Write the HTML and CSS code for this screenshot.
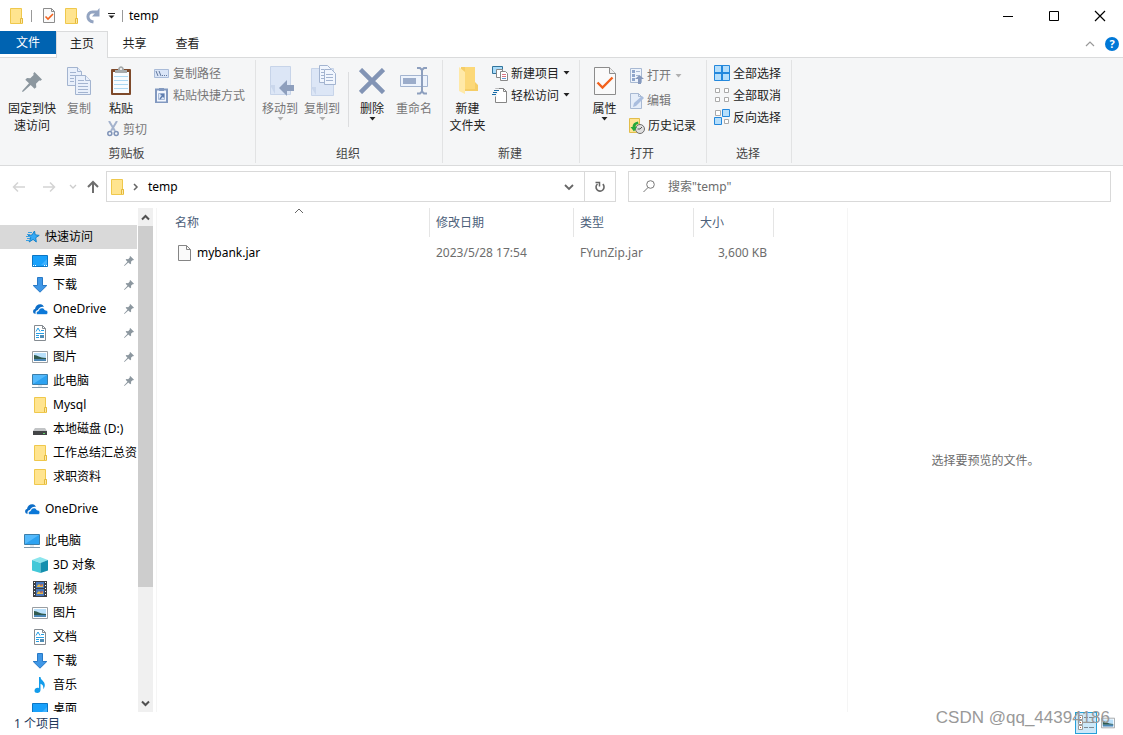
FILE: index.html
```html
<!DOCTYPE html>
<html lang="zh-CN">
<head>
<meta charset="utf-8">
<title>temp</title>
<link rel="stylesheet" href="styles.css">
</head>
<body>
<svg class="sprite" aria-hidden="true">
  <symbol id="folder" viewBox="0 0 16 16"><path d="M2.500.5h11v10h1v5h-12z" fill="#ffe48f" stroke="#efc84c"/><path d="M12.500 15V10.500h2V15" fill="#ffe9a5" stroke="#e3b93c"/></symbol>
  <symbol id="star" viewBox="0 0 16 16"><path d="M10.500 2l.7 3.800 4 .6-3.500 2.300.6 4.300-3.200-2.600-4 2.600 1.800-4.300L4 6.500l4-.5z" fill="#35a9f5" stroke="#1583cc"/><path d="M4 3.500h4M3 5.500h3M2 7.500h4M3 9.500h3M2 11.500h4" stroke="#3c9fe0"/></symbol>
  <symbol id="pin" viewBox="0 0 20 20"><path d="M12.500 0L20 7.500l-1.500 1.200-1.300-.3-3.200 3.300.3 3.500-1.800 1.500L8.700 13 1.500 19.500 0 20l.5-1.500L7 11.300 3.300 7.700 5 6l3.300.3L11.600 3l-.3-1.500z" fill="#8c979f"/></symbol>
  <symbol id="desktop" viewBox="0 0 16 16"><path d="M.5 2.500h15v11H.5z" fill="#19a1fb" stroke="#0b76c5"/><path d="M9 12L15 6v6z" fill="#3fb2ff"/><path d="M1 12.500h1M3 12.500h1M12 12.500h1M14 12.500h1" stroke="#fff"/></symbol>
  <symbol id="down" viewBox="0 0 16 16"><path d="M5.500.5h5v8h4.300L8 15.200 1.200 8.500h4.300z" fill="#3f97e6" stroke="#2879c6"/></symbol>
  <symbol id="cloud" viewBox="0 0 16 16"><path d="M2 12.500C.5 11 1 8.300 3 8 3.500 5 5.800 3 8.500 3.200c1.700.2 2.800 1.200 3.500 2.600-3-.6-5.300.8-6 3.200C3.800 9.300 3 11 3.800 12.800z" fill="#0c6dc7"/><path d="M5.500 13.500c-1.600-.4-1.500-3.400 1-3.600C7 6.700 11.500 5.800 12.800 9c1.800 0 3 .8 3 2.500 0 1.200-.7 2-1.800 2z" fill="#0b78d8" stroke="#fff" stroke-width=".6"/></symbol>
  <symbol id="doc" viewBox="0 0 16 16"><path d="M2.500.5h8l3 3v12h-11z" fill="#fff" stroke="#858b91"/><path d="M10.500.5v3h3" fill="none" stroke="#858b91"/><path d="M4 6.500L6 3l2 3.500M9 5.500h3M4 8.500h8M4 10.500h3M4 12.500h3" fill="none" stroke="#259ee4"/><path d="M8 10h4v3H8z" fill="#4f8db5"/></symbol>
  <symbol id="picture" viewBox="0 0 16 16"><path d="M.5 2.500h15v11H.5z" fill="#fff" stroke="#999ea3"/><path d="M2 4h12v8H2z" fill="#b9e0fb"/><path d="M2 6c4 0 5 3 12 3v1H2z" fill="#315b50"/><path d="M2 10h12v2H2z" fill="#4c87b6"/></symbol>
  <symbol id="pc" viewBox="0 0 16 16"><path d="M.5 1.500h15v10H.5z" fill="#54b9fb" stroke="#3b7eaa"/><path d="M1 11l14-9v9z" fill="#2ca2f1"/><path d="M6 12h4v2H6z" fill="#e4eaee"/><path d="M0 14.500h16" stroke="#8299aa"/></symbol>
  <symbol id="drive" viewBox="0 0 16 16"><path d="M3 7h10l2 3H1z" fill="#c2c4c6"/><path d="M1 10h14v4H1z" fill="#434547"/><path d="M11 12.500h2" stroke="#63d66b"/></symbol>
  <symbol id="cube" viewBox="0 0 16 16"><path d="M0 3l8-3 8 3-7 3z" fill="#8be5ed"/><path d="M0 3l8.500 3v10L0 13.500z" fill="#42c8d8"/><path d="M8.500 6L16 3v10.500L8.500 16z" fill="#148fae"/></symbol>
  <symbol id="video" viewBox="0 0 16 16"><path d="M1 0h14v16H1z" fill="#3d3f43"/><path d="M4 1h8v6H4zM4 8h8v7H4z" fill="#4778bd"/><path d="M5 5l2-2 2 2 2-2v3H5zM5 12l2-2 2 2 2-2v3H5z" fill="#e5b94a"/><path d="M8 4h3M8 11h3" stroke="#cf5848"/><path d="M2.500 1v14M13.500 1v14" stroke="#fff" stroke-dasharray="1 2"/></symbol>
  <symbol id="music" viewBox="0 0 16 16"><path d="M7 0h1.500c.3 3.500 4.300 4 4.300 8 0 1.800-.6 3-1.600 4.200.6-3.200-.6-4.800-2.700-5.500V13c0 1.800-1.500 3-3.200 3S2.500 15 2.500 13.700c0-2.200 2.700-3.500 4.500-2.500z" fill="#129ceb"/></symbol>
  <symbol id="check-doc" viewBox="0 0 22 28"><path d="M.5.500h15l6 6v21H.5z" fill="#fafafa" stroke="#8c8c8c"/><path d="M15.500.500v6h6" fill="#eee" stroke="#8c8c8c"/><path d="M3.500 15.500l5 5 10-10" fill="none" stroke="#f2611c" stroke-width="2.400"/></symbol>
  <symbol id="caret" viewBox="0 0 7 4"><path d="M.5 0h6l-3 3.500z" fill="currentColor"/></symbol>
</svg>

<div class="window">
  <header class="titlebar">
    <svg class="i16 app-icon"><use href="#folder"/></svg>
    <span class="bar"></span>
    <button class="quick" aria-label="属性"><svg width="12" height="15" viewBox="0 0 12 15"><path d="M.5.500h8l3 3v11H.5z" fill="#fafafa" stroke="#8c8c8c"/><path d="M8.500.500v3h3" fill="none" stroke="#8c8c8c"/><path d="M2.500 8.500l2.500 2.500 5-5" fill="none" stroke="#f2611c" stroke-width="1.600"/></svg></button>
    <button class="quick" aria-label="新建文件夹"><svg class="i16"><use href="#folder"/></svg></button>
    <button class="quick" aria-label="重做"><svg width="14" height="16" viewBox="0 0 14 16"><path d="M7.500 14C0 13 .5 4 6.500 4H11" fill="none" stroke="#93a4c1" stroke-width="3"/><path d="M13.500 0v8.500H6z" fill="#93a4c1"/></svg></button>
    <button class="quick narrow" aria-label="自定义快速访问工具栏"><svg width="7" height="6" viewBox="0 0 7 6"><path d="M0 .5h7" stroke="#222"/><path d="M.5 2.500h6l-3 3z" fill="#222"/></svg></button>
    <span class="bar last"></span>
    <h1>temp</h1>
    <div class="window-buttons">
      <button aria-label="最小化"><svg width="12" height="12"><path d="M1 6.500h10" stroke="#000"/></svg></button>
      <button aria-label="最大化"><svg width="12" height="12"><path d="M1.500 1.500h9v9h-9z" fill="none" stroke="#000"/></svg></button>
      <button aria-label="关闭"><svg width="12" height="12"><path d="M1 1l10 10M11 1L1 11" stroke="#000" stroke-width="1.200"/></svg></button>
    </div>
  </header>

  <nav class="tabs" aria-label="功能区">
    <button class="tab file">文件</button>
    <button class="tab active">主页</button>
    <button class="tab">共享</button>
    <button class="tab">查看</button>
    <div class="tab-tools">
      <button aria-label="折叠功能区"><svg width="10" height="6"><path d="M1 5l4-4 4 4" fill="none" stroke="#999" stroke-width="1.200"/></svg></button>
      <button class="help" aria-label="帮助">?</button>
    </div>
  </nav>

  <div class="ribbon">
    <section class="group clipboard">
      <div class="tools">
        <button class="big pin-btn"><span class="art"><svg width="20" height="20"><use href="#pin"/></svg></span>固定到快<br>速访问</button>
        <button class="big copy-btn" disabled><span class="art"><svg width="24" height="28" viewBox="0 0 24 28"><g fill="#e9f0fb" stroke="#a3b4d0"><path d="M.5.500h10l4 4v14H.5z"/><path d="M3 5.500h6M3 8.500h9M3 11.500h4M3 14.500h4"/><path d="M8.500 8.500h10l5 5v14h-15z"/><path d="M10.500.500v4h4M18.500 8.500v5h5" /><path d="M11 13.500h6M11 16.500h10M11 19.500h10M11 22.500h10M11 25.500h10"/></g></svg></span>复制</button>
        <div class="paste">
          <button class="big"><span class="art"><svg width="20" height="30" viewBox="0 0 20 30"><rect y="3" width="20" height="26" rx="1" fill="#7e4a2b"/><path d="M2 6h16v21H2z" fill="#f8fcff"/><path d="M3 10.500h14M3 14.500h14M3 18.500h14M3 22.500h14" stroke="#add8f2"/><path d="M4 7V4h3c0-5 6-5 6 0h3v3z" fill="#a6abad"/><circle cx="10" cy="3" r="1" fill="#fff"/></svg></span>粘贴</button>
          <button class="small cut" disabled><svg width="12" height="16" viewBox="0 0 12 16"><path d="M2 0l6 10M10 0L4 10" stroke="#a3b2cd" stroke-width="2"/><circle cx="2.800" cy="12.500" r="2" fill="none" stroke="#7f93b8" stroke-width="1.500"/><circle cx="9.200" cy="12.500" r="2" fill="none" stroke="#7f93b8" stroke-width="1.500"/></svg>剪切</button>
        </div>
        <div class="stack">
          <button class="small" disabled><svg width="15" height="16" viewBox="0 0 15 16"><path d="M.5 4.500h14v8H.5z" fill="#dae5f7" stroke="#a9bbd8"/><path d="M2 6l2 5M5 6l2 5M8 10.500h1M10 10.500h1M12 10.500h1" stroke="#63799e"/></svg>复制路径</button>
          <button class="small" disabled><svg width="15" height="16" viewBox="0 0 15 16"><path d="M2 2.500h11v13H2z" fill="#f3f7fe" stroke="#8299c0" stroke-width="2"/><path d="M5 1h5v3H5z" fill="#8299c0"/><path d="M4.500 6.500h6v6h-6z" fill="#dce7f8" stroke="#a9bbd8"/><path d="M6 12l3-4M6.500 7.500h3v3" fill="none" stroke="#5f7eaf" stroke-width="1.400"/></svg>粘贴快捷方式</button>
        </div>
      </div>
      <h2>剪贴板</h2>
    </section>

    <section class="group organize">
      <div class="tools">
        <button class="big" disabled><span class="art"><svg width="28" height="30" viewBox="0 0 28 30"><path d="M4.500.500h20v28h-20z" fill="#dce6f6" stroke="#c7d4e9"/><path d="M4 19h5v9" fill="#cad7ec"/><path d="M28 19v6h-7v5l-8-8 8-8v5z" fill="#8e9fbd"/></svg></span>移动到<svg class="caret"><use href="#caret"/></svg></button>
        <button class="big" disabled><span class="art"><svg width="28" height="32" viewBox="0 0 28 32"><path d="M3.500 3.500h22v27h-22z" fill="#dce6f6" stroke="#c7d4e9"/><path d="M3 22h5v8" fill="#cad7ec"/><g fill="#f1f6fe" stroke="#a3b4d0"><path d="M11.500.500h8l3 3v14h-11z"/><path d="M13 4.500h3M13 7.500h3M13 10.500h3M13 13.500h3"/><path d="M16.500 4.500h7l4 4v11h-11z"/><path d="M18 9.500h7M18 12.500h7M18 15.500h7"/></g></svg></span>复制到<svg class="caret"><use href="#caret"/></svg></button>
        <span class="rule"></span>
        <button class="big"><span class="art"><svg width="26" height="26"><path d="M1.500 1.500l23 23M24.500 1.500l-23 23" stroke="#8294b5" stroke-width="4.500"/></svg></span>删除<svg class="caret"><use href="#caret"/></svg></button>
        <button class="big" disabled><span class="art"><svg width="28" height="28" viewBox="0 0 28 28"><path d="M.5 8.500h27v11H.5z" fill="#edf3fc" stroke="#a3b4d0"/><path d="M3 11h13v6H3z" fill="#9bacca"/><path d="M17 1h3l2 2 2-2h3M22 2v24M17 26.500h3l2-2 2 2h3" fill="none" stroke="#8d9fbe" stroke-width="2"/></svg></span>重命名</button>
      </div>
      <h2>组织</h2>
    </section>

    <section class="group create">
      <div class="tools">
        <button class="big"><span class="art"><svg width="20" height="28" viewBox="0 0 20 28"><path d="M3 0h14v15l3 3v6H3z" fill="#f5cd66"/><path d="M7 0h10v22H7z" fill="#fcd878"/><path d="M1 0l6 5v22l-6-3z" fill="#ffe9a8"/></svg></span>新建<br>文件夹</button>
        <div class="stack">
          <button class="small"><svg width="16" height="16" viewBox="0 0 16 16"><path d="M.5 1.500h10v7H.5z" fill="#a9dcfa" stroke="#32749c"/><path d="M4.500 4.500h6v8h-6z" fill="#fff" stroke="#888"/><path d="M8.500 6.500h5l2 2v7h-7z" fill="#fff" stroke="#888"/><path d="M10 9.500h4M10 11.500h4" stroke="#db7382"/><path d="M10 13.500h4" stroke="#659bd1"/></svg>新建项目<svg class="caret"><use href="#caret"/></svg></button>
          <button class="small"><svg width="16" height="16" viewBox="0 0 16 16"><path d="M3.500 1.500h8l3 3v11h-11z" fill="#fff" stroke="#858585"/><path d="M11.500 1.500v3h3" fill="none" stroke="#858585"/><path d="M2 3h5M1 5.500h5M0 8h5" stroke="#f5f6f7" stroke-width="3"/><path d="M2 3.500h5M1 5.500h4M0 7.500h4" stroke="#176ca8"/></svg>轻松访问<svg class="caret"><use href="#caret"/></svg></button>
        </div>
      </div>
      <h2>新建</h2>
    </section>

    <section class="group open">
      <div class="tools">
        <button class="big"><span class="art"><svg width="22" height="28"><use href="#check-doc"/></svg></span>属性<svg class="caret"><use href="#caret"/></svg></button>
        <div class="stack tall">
          <button class="small" disabled><svg width="15" height="16" viewBox="0 0 15 16"><path d="M1.500.500h11v14h-11z" fill="#eef4fc" stroke="#a8b9d3"/><path d="M3 2h3v3H3zM3 6h3v3H3zM3 10h3v3H3z" fill="#8fa5ca"/><path d="M7 3.500h4M7 7.500h3" stroke="#a8b9d3"/><path d="M10.500 7l4.500 4h-3v5H9v-5H6z" fill="#8699bd"/></svg>打开<svg class="caret"><use href="#caret"/></svg></button>
          <button class="small" disabled><svg width="15" height="16" viewBox="0 0 15 16"><path d="M1.500.500h8l3 3v12h-11z" fill="#e5edf9" stroke="#a8b9d3"/><path d="M9.500.500v3h3" fill="none" stroke="#a8b9d3"/><path d="M4 14l1-4 8-7 2 2-8 8z" fill="#a9bdde"/></svg>编辑</button>
          <button class="small"><svg width="16" height="16" viewBox="0 0 16 16"><path d="M.5.500h10v14H.5z" fill="#ffe494" stroke="#e2bd4b"/><circle cx="11" cy="11" r="4.500" fill="#dfdfdf" stroke="#6e6e6e"/><path d="M11 11l2-2M11 11H8.500" stroke="#555"/><path d="M9 3.500C5.500 4 3.500 6 3.500 9H1.500L5 13.500 8 9H6.500c0-2 1-3 3-3z" fill="#24a83b"/></svg>历史记录</button>
        </div>
      </div>
      <h2>打开</h2>
    </section>

    <section class="group select">
      <div class="tools">
        <div class="stack">
          <button class="small"><svg width="16" height="16"><path d="M.5.500h15v15H.5z" fill="#b5defb" stroke="#2488dc"/><path d="M8 1v14M1 8h14" stroke="#2488dc" stroke-width="2"/></svg>全部选择</button>
          <button class="small"><svg width="16" height="16"><path d="M1.500 1.500h4v4h-4zM10.500 1.500h4v4h-4zM1.500 10.500h4v4h-4zM10.500 10.500h4v4h-4z" fill="#fff" stroke="#aaa"/></svg>全部取消</button>
          <button class="small"><svg width="16" height="16"><path d="M1.500 1.500h5v5h-5zM10.500 10.500h4v4h-4z" fill="#fff" stroke="#aaa"/><path d="M8.500.500h7v7h-7zM.5 8.500h7v7h-7z" fill="#b5defb" stroke="#2488dc"/></svg>反向选择</button>
        </div>
      </div>
      <h2>选择</h2>
    </section>
  </div>

  <div class="location">
    <div class="nav-buttons">
      <button aria-label="后退" disabled><svg width="14" height="12"><path d="M13 6H2M6 1.500L1.500 6 6 10.500" fill="none" stroke="#d4d4d4" stroke-width="1.500"/></svg></button>
      <button aria-label="前进" disabled><svg width="14" height="12"><path d="M1 6h11M8 1.500L12.500 6 8 10.500" fill="none" stroke="#d4d4d4" stroke-width="1.500"/></svg></button>
      <button class="recent" aria-label="最近浏览的位置" disabled><svg width="8" height="6"><path d="M1 1l3 3 3-3" fill="none" stroke="#ccc" stroke-width="1.300"/></svg></button>
      <button class="up" aria-label="上移"><svg width="12" height="14"><path d="M6 13V2M1 7l5-5 5 5" fill="none" stroke="#6e6e6e" stroke-width="2"/></svg></button>
    </div>
    <div class="fields">
      <div class="address">
        <svg class="i16"><use href="#folder"/></svg>
        <svg class="crumb" width="6" height="8"><path d="M1 1l3 3-3 3" fill="none" stroke="#666" stroke-width="1.500"/></svg>
        <a href="#temp">temp</a>
        <button class="history" aria-label="以前的位置"><svg width="10" height="8"><path d="M1 2l4 4 4-4" fill="none" stroke="#666" stroke-width="1.800"/></svg></button>
        <button class="refresh" aria-label="刷新"><svg width="12" height="12" viewBox="0 0 12 12"><path d="M3.500 3A4 4 0 1 0 8.800 3.200" fill="none" stroke="#666" stroke-width="1.600"/><path d="M1.500 1.500h4v4" fill="none" stroke="#666" stroke-width="1.500"/></svg></button>
      </div>
      <label class="search">
        <svg width="12" height="13"><circle cx="7.500" cy="4.500" r="3.800" fill="none" stroke="#777"/><path d="M5 7.500L.5 12" stroke="#777"/></svg>
        <input type="text" aria-label="搜索" placeholder='搜索"temp"'>
      </label>
    </div>
  </div>

  <main class="content">
    <nav class="tree" aria-label="导航窗格">
      <ul>
        <li><a class="root selected" href="#quick"><svg class="i16"><use href="#star"/></svg>快速访问</a></li>
        <li><a href="#desktop1"><svg class="i16"><use href="#desktop"/></svg>桌面<svg class="pinned"><use href="#pin"/></svg></a></li>
        <li><a href="#dl1"><svg class="i16"><use href="#down"/></svg>下载<svg class="pinned"><use href="#pin"/></svg></a></li>
        <li><a href="#od1"><svg class="i16"><use href="#cloud"/></svg>OneDrive<svg class="pinned"><use href="#pin"/></svg></a></li>
        <li><a href="#doc1"><svg class="i16"><use href="#doc"/></svg>文档<svg class="pinned"><use href="#pin"/></svg></a></li>
        <li><a href="#pic1"><svg class="i16"><use href="#picture"/></svg>图片<svg class="pinned"><use href="#pin"/></svg></a></li>
        <li><a href="#pc1"><svg class="i16"><use href="#pc"/></svg>此电脑<svg class="pinned"><use href="#pin"/></svg></a></li>
        <li><a href="#mysql"><svg class="i16"><use href="#folder"/></svg>Mysql</a></li>
        <li><a href="#d"><svg class="i16"><use href="#drive"/></svg>本地磁盘 (D:)</a></li>
        <li><a href="#work"><svg class="i16"><use href="#folder"/></svg>工作总结汇总资</a></li>
        <li><a href="#job"><svg class="i16"><use href="#folder"/></svg>求职资料</a></li>
      </ul>
      <ul>
        <li><a class="root" href="#od2"><svg class="i16"><use href="#cloud"/></svg>OneDrive</a></li>
      </ul>
      <ul>
        <li><a class="root" href="#pc2"><svg class="i16"><use href="#pc"/></svg>此电脑</a></li>
        <li><a href="#3d"><svg class="i16"><use href="#cube"/></svg>3D 对象</a></li>
        <li><a href="#video2"><svg class="i16"><use href="#video"/></svg>视频</a></li>
        <li><a href="#pic2"><svg class="i16"><use href="#picture"/></svg>图片</a></li>
        <li><a href="#doc2"><svg class="i16"><use href="#doc"/></svg>文档</a></li>
        <li><a href="#dl2"><svg class="i16"><use href="#down"/></svg>下载</a></li>
        <li><a href="#music2"><svg class="i16"><use href="#music"/></svg>音乐</a></li>
        <li><a href="#desktop2"><svg class="i16"><use href="#desktop"/></svg>桌面</a></li>
      </ul>
    </nav>
    <div class="scrollbar">
      <button aria-label="向上滚动"><svg width="9" height="7"><path d="M1 5.500L4.500 2 8 5.500" fill="none" stroke="#505050" stroke-width="2"/></svg></button>
      <span class="thumb"></span>
      <span class="track"></span>
      <button aria-label="向下滚动"><svg width="9" height="7"><path d="M1 1.500L4.500 5 8 1.500" fill="none" stroke="#505050" stroke-width="2"/></svg></button>
    </div>
    <section class="files">
      <table>
        <thead>
          <tr>
            <th class="name">名称<svg class="sort" width="10" height="6"><path d="M1 5l4-4 4 4" fill="none" stroke="#666"/></svg></th>
            <th class="date">修改日期</th>
            <th class="type">类型</th>
            <th class="size">大小</th>
          </tr>
        </thead>
        <tbody>
          <tr>
            <td><span class="file-name"><svg width="13" height="16" viewBox="0 0 13 16"><path d="M.5.500h8l4 4v11H.5z" fill="#fafafa" stroke="#858585"/><path d="M8.500.500v4h4" fill="none" stroke="#858585"/></svg>mybank.jar</span></td>
            <td>2023/5/28 17:54</td>
            <td>FYunZip.jar</td>
            <td class="num">3,600 KB</td>
          </tr>
        </tbody>
      </table>
    </section>
    <aside class="preview">选择要预览的文件。</aside>
  </main>

  <footer class="status">
    <span class="count">1 个项目</span>
    <div class="views">
      <button class="view on" aria-label="详细信息"><svg width="16" height="16"><path d="M.5.500h4v4h-4zM.5 5.500h4v4h-4zM.5 10.500h4v4h-4z" fill="#fff" stroke="#9a9a9a"/><path d="M2 2.500h1M2 7.500h1M2 12.500h1" stroke="#c0603a"/><path d="M6 2.500h4M11 2.500h5M6 7.500h4M11 7.500h5M6 12.500h4M11 12.500h5" stroke="#7d8b94"/></svg></button>
      <button class="view" aria-label="大图标"><svg class="i14" viewBox="0 0 16 16"><use href="#picture"/></svg></button>
    </div>
    <span class="watermark">CSDN @qq_44394186</span>
  </footer>
</div>
</body>
</html>
```
FILE: styles.css
```css
* { box-sizing: border-box; }
body {
  margin: 0;
  font: 12px/17px "Noto Sans", "Noto Sans CJK SC", sans-serif;
  color: #000;
  background: #fff;
}
button, input { font: inherit; color: inherit; }
button { border: 0; padding: 0; background: none; }
a { color: inherit; text-decoration: none; }
svg { flex: none; }
ul { list-style: none; margin: 0; padding: 0; }
.sprite { position: absolute; width: 0; height: 0; }
.i16 { width: 16px; height: 16px; }
.i14 { width: 14px; height: 14px; }
.window { display: flex; flex-direction: column; height: 100vh; overflow: hidden; }

.titlebar { display: flex; align-items: center; height: 31px; flex: none; }
.app-icon { margin-left: 8px; }
.bar { width: 1px; height: 12px; background: #999; margin: 0 6px 0 7px; }
.bar.last { margin-left: 4px; }
.quick { display: grid; place-items: center; width: 22px; height: 22px; }
.quick.narrow { width: 14px; }
.titlebar h1 { margin: 0; font-size: 12px; font-weight: 400; }
.window-buttons { display: flex; margin-left: auto; }
.window-buttons button { display: grid; place-items: center; width: 46px; height: 30px; }

.tabs { display: flex; height: 27px; flex: none; border-bottom: 1px solid #dadbdc; }
.tab { width: 53px; height: 25px; color: #222; }
.tab.file { width: 56px; height: 23px; background: #0063b1; color: #fff; }
.tab.active { width: 52px; height: 27px; padding-bottom: 3px; background: #f5f6f7; border: 1px solid #dadbdc; border-bottom: 0; }
.tab-tools { display: flex; align-items: center; gap: 10px; margin-left: auto; padding-right: 4px; }
.tab-tools button { display: grid; place-items: center; }
.tab-tools .help { width: 14px; height: 14px; border-radius: 50%; background: #0078d7; color: #fff; font-size: 11px; line-height: 14px; font-weight: 700; }

.ribbon { display: flex; height: 108px; flex: none; background: #f5f6f7; border-bottom: 1px solid #dadbdc; color: #222; }
.group { display: flex; flex-direction: column; justify-content: space-between; position: relative; padding-right: 1px; }
.group::after { content: ""; position: absolute; right: 0; top: 2px; bottom: 2px; width: 1px; background: #e2e3e4; }
.group h2 { margin: 0 2px 3px 0; font-size: 12px; font-weight: 400; text-align: center; color: #444; }
.clipboard { width: 256px; }
.organize { width: 187px; }
.create { width: 137px; }
.open { width: 127px; }
.select { width: 85px; }
.tools { display: flex; }
.big { display: flex; flex-direction: column; align-items: center; padding-top: 7px; width: 42px; height: 77px; white-space: nowrap; text-align: center; }
.big .art { display: grid; place-items: center; height: 32px; margin-bottom: 3px; }
.big:disabled, .small:disabled { color: #777; }
.caret { width: 7px; height: 4px; }
:disabled .caret { color: #b0b0b0; }
.pin-btn { width: 64px; display: block; }
.pin-btn .art { margin-bottom: 2px; }
.copy-btn { width: 30px; margin-right: 10px; }
.paste { width: 50px; }
.paste .big { width: 34px; height: 60px; }
.small { display: flex; align-items: center; gap: 3px; height: 22px; white-space: nowrap; }
.small .caret { margin-left: 1px; }
.cut { gap: 4px; padding-left: 3px; }
.stack { padding-top: 4px; }
.clipboard .stack .small { gap: 4px; }
.tall { padding-top: 5px; }
.tall .small { height: 25px; }
.organize .tools { padding-left: 3px; }
.rule { width: 1px; height: 55px; margin: 14px 2px 0 5px; background: #dcdddf; }
.create .big, .open .big { width: 49px; }
.select .tools { padding-left: 7px; }

.location { display: flex; height: 42px; flex: none; padding: 5px 12px 6px 0; }
.nav-buttons { display: flex; width: 106px; flex: none; padding-left: 4px; }
.nav-buttons button { display: grid; place-items: center; width: 30px; }
.nav-buttons .recent { width: 17px; }
.nav-buttons .up { width: 24px; }
.fields { display: grid; grid-template-columns: 510fr 483fr; gap: 12px; flex: 1; min-width: 0; }
.address { display: flex; align-items: center; min-width: 0; border: 1px solid #d9d9d9; padding-left: 2px; }
.address .crumb { margin: 0 9px 0 8px; }
.address button { display: grid; place-items: center; height: 100%; width: 31px; }
.address .history { margin-left: auto; }
.address .refresh { border-left: 1px solid #d9d9d9; }
.search { display: flex; align-items: center; gap: 13px; min-width: 0; padding-left: 14px; border: 1px solid #d9d9d9; }
.search input { flex: 1; min-width: 0; border: 0; padding: 0; outline: 0; background: none; }
.search input::placeholder { color: #6d6d6d; opacity: 1; }

.content { display: flex; flex: 1; min-height: 0; }
.tree { width: 138px; flex: none; overflow: hidden; padding-top: 17px; }
.tree ul + ul { margin-top: 8px; }
.tree a { display: flex; align-items: center; gap: 5px; height: 24px; padding: 0 0 1px 32px; margin-right: 1px; white-space: nowrap; }
.tree .root { padding-left: 24px; }
.tree .selected { background: #d9d9d9; }
.pinned { width: 10px; height: 10px; margin: 0 3px 0 auto; }
.scrollbar { display: flex; flex-direction: column; width: 16px; flex: none; background: #f0f0f0; border-right: 1px solid #fff; }
.scrollbar button { display: grid; place-items: center; height: 18px; }
.thumb { flex: 362; background: #cdcdcd; }
.track { flex: 107; }
.files { flex: 1; min-width: 0; margin-left: 2px; padding-left: 11px; border-left: 1px solid #f5f5f5; }
table { width: 606px; table-layout: fixed; border-collapse: separate; border-spacing: 0; }
th { height: 29px; padding: 0 6px; border-right: 1px solid #e5e5e5; font-weight: 400; text-align: left; color: #4c607a; position: relative; }
.name { width: 262px; padding-left: 7px; }
.date { width: 144px; }
.type { width: 120px; }
.size { width: 80px; }
.sort { position: absolute; left: 0; right: 0; top: 0; margin: 0 auto; }
td { height: 31px; padding: 0 7px 0 6px; color: #6d6d6d; }
td.num { text-align: right; }
.file-name { display: flex; align-items: center; gap: 6px; padding-left: 4px; color: #000; }
.preview { display: flex; align-items: center; justify-content: center; width: 276px; flex: none; border-left: 1px solid #f5f5f5; color: #6d6d6d; }

.status { display: flex; position: relative; height: 23px; flex: none; padding: 0 5px 0 14px; color: #1e395b; }
.count { line-height: 23px; padding-right: 10px; }
.views { display: flex; margin-left: auto; }
.view { display: grid; place-items: center; width: 21px; height: 22px; }
.view.on { width: 22px; background: #cce8f9; border: 1px solid #26a0da; }
.watermark { position: absolute; right: 13px; bottom: 8px; font: 17px/18px "Liberation Sans", sans-serif; color: #999; }
```
